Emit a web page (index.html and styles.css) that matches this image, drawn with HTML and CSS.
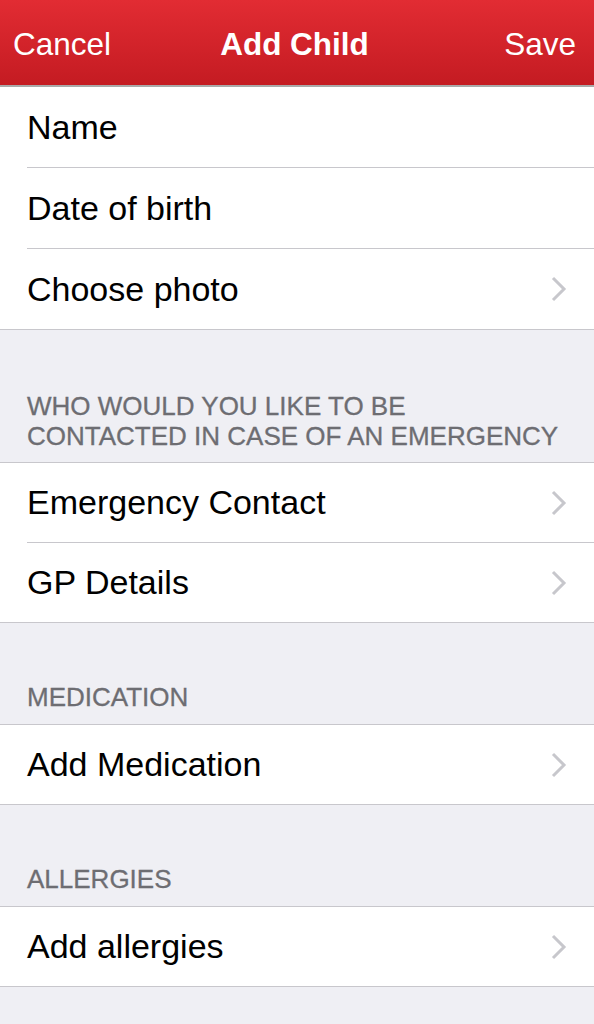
FILE: index.html
```html
<!DOCTYPE html>
<html lang="en">
<head>
    <meta charset="UTF-8">
    <meta name="viewport" content="width=device-width, initial-scale=1.0">
    <title>Add Child</title>
    <link rel="stylesheet" href="styles.css">
</head>
<body>

    <header class="navbar">
        <span class="nav-btn nav-left">Cancel</span>
        <span class="nav-title">Add Child</span>
        <span class="nav-btn nav-right">Save</span>
    </header>

    <div class="group group-first">
        <div class="row"><div class="row-inner">Name</div></div>
        <div class="row"><div class="row-inner">Date of birth</div></div>
        <div class="row">
            <div class="row-inner">
                <span>Choose photo</span>
                <svg class="chevron" viewBox="0 0 16 26"><path d="M2 2 L13 13 L2 24"/></svg>
            </div>
        </div>
    </div>

    <div class="section-header section-tall">WHO WOULD YOU LIKE TO BE<br>CONTACTED IN CASE OF AN EMERGENCY</div>
    <div class="group">
        <div class="row">
            <div class="row-inner">
                <span>Emergency Contact</span>
                <svg class="chevron" viewBox="0 0 16 26"><path d="M2 2 L13 13 L2 24"/></svg>
            </div>
        </div>
        <div class="row">
            <div class="row-inner">
                <span>GP Details</span>
                <svg class="chevron" viewBox="0 0 16 26"><path d="M2 2 L13 13 L2 24"/></svg>
            </div>
        </div>
    </div>

    <div class="section-header">MEDICATION</div>
    <div class="group">
        <div class="row">
            <div class="row-inner">
                <span>Add Medication</span>
                <svg class="chevron" viewBox="0 0 16 26"><path d="M2 2 L13 13 L2 24"/></svg>
            </div>
        </div>
    </div>

    <div class="section-header">ALLERGIES</div>
    <div class="group">
        <div class="row">
            <div class="row-inner">
                <span>Add allergies</span>
                <svg class="chevron" viewBox="0 0 16 26"><path d="M2 2 L13 13 L2 24"/></svg>
            </div>
        </div>
    </div>

</body>
</html>
```

FILE: styles.css
```css
body {
    font-family: "Liberation Sans", Arial, sans-serif;
    background-color: #efeff4;
    margin: 0;
    padding: 0;
}

/* top bar */
.navbar {
    display: grid;
    grid-template-columns: 1fr auto 1fr;
    align-items: center;
    height: 81px;
    padding: 4px 18px 0 13px;
    background: linear-gradient(#e22c33, #c41b22);
    border-bottom: 2px solid #a9a9a9;
    color: white;
    font-size: 31.5px;
}
.nav-title {
    font-weight: bold;
    text-align: center;
}
.nav-right {
    text-align: right;
}

/* table groups */
.group {
    background: white;
    border-top: 1px solid #c8c7cc;
    border-bottom: 1px solid #c8c7cc;
}
.group-first {
    border-top: none;
}
.row {
    padding-left: 27px;
}
.row-inner {
    display: flex;
    align-items: center;
    justify-content: space-between;
    height: 79px;
    padding-right: 27px;
    border-bottom: 1px solid #c8c7cc;
    font-size: 34px;
    color: #000;
}
.group-first .row-inner {
    height: 80px;
}
.row:last-child .row-inner {
    border-bottom: none;
}
.chevron {
    width: 16px;
    height: 26px;
    fill: none;
    stroke: #c7c7cc;
    stroke-width: 3;
}

.section-header {
    padding: 59px 27px 12px 27px;
    font-size: 26px;
    line-height: 30px;
    color: #6d6d72;
    -webkit-text-stroke: 0.3px #6d6d72;
}
.section-tall {
    padding-top: 61px;
    padding-bottom: 11px;
}
```
